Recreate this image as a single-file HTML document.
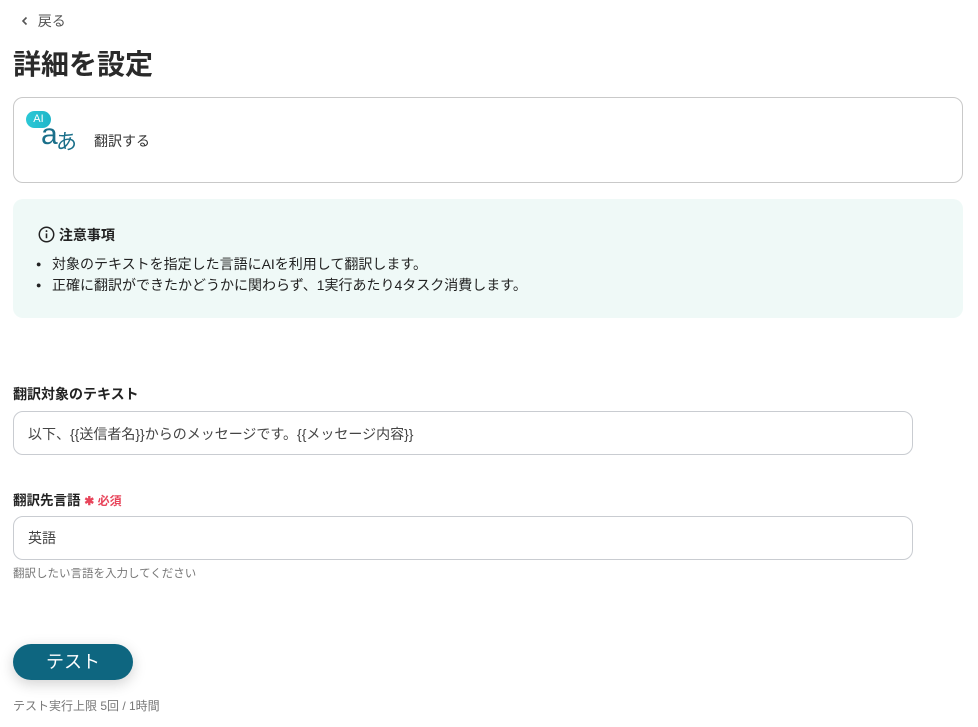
<!DOCTYPE html>
<html><head><meta charset="utf-8"><style>
*{box-sizing:border-box;margin:0;padding:0}
body{width:978px;height:727px;background:#fff;font-family:"Liberation Sans","Noto Sans CJK JP",sans-serif;color:#333;position:relative;overflow:hidden}
.a{position:absolute}
.box{border:1px solid #c9ccd1;border-radius:10px}
.b{display:inline-block;width:16px;font-size:9px;vertical-align:2px}
</style></head><body>
<div class="a" style="left:20px;top:11px;font-size:14px;color:#555">
<svg width="10" height="10" viewBox="0 0 10 10" style="vertical-align:0px"><path d="M6.5 1.5 L3 5 L6.5 8.5" stroke="#555" stroke-width="1.6" fill="none"/></svg>&nbsp; 戻る</div>
<div class="a" style="left:13px;top:47px;font-size:28px;font-weight:bold;color:#2a2a2a;line-height:36px">詳細を設定</div>
<div class="a box" style="left:13px;top:97px;width:950px;height:86px;border-color:#c9c9c9"></div>
<div class="a" style="left:41px;top:120px;font-size:30px;color:#1a6f8a;line-height:30px">a</div>
<div class="a" style="left:56px;top:130px;font-size:21px;color:#1a6f8a;line-height:26px">あ</div>
<div class="a" style="left:26px;top:111px;width:25px;height:17px;border-radius:9px;background:linear-gradient(90deg,#2cc8d6,#1fb6c9);color:#fff;font-size:11px;text-align:center;line-height:17px">AI</div>
<div class="a" style="left:94px;top:131px;font-size:14px">翻訳する</div>
<div class="a" style="left:13px;top:199px;width:950px;height:119px;background:#eff9f7;border-radius:10px"></div>
<div class="a" style="left:38px;top:225px;font-size:14px;font-weight:bold;color:#222">
<svg width="17" height="17" viewBox="0 0 16 16" style="vertical-align:-3px"><circle cx="8" cy="8" r="6.8" stroke="#222" stroke-width="1.4" fill="none"/><path d="M8 7v4.5" stroke="#222" stroke-width="1.5"/><circle cx="8" cy="4.8" r="0.9" fill="#222"/></svg> 注意事項</div>
<div class="a" style="left:36px;top:254px;font-size:14px;line-height:21px;color:#222">
<div><span class="b">●</span>対象のテキストを指定した言語にAIを利用して翻訳します。</div>
<div><span class="b">●</span>正確に翻訳ができたかどうかに関わらず、1実行あたり4タスク消費します。</div></div>
<div class="a" style="left:13px;top:384px;font-size:14px;font-weight:bold;color:#222">翻訳対象のテキスト</div>
<div class="a box" style="left:13px;top:411px;width:900px;height:44px"></div>
<div class="a" style="left:28px;top:424px;font-size:14px;color:#444">以下、{{送信者名}}からのメッセージです。{{メッセージ内容}}</div>
<div class="a" style="left:13px;top:489px;font-size:13.5px;font-weight:bold;color:#222">翻訳先言語 <span style="color:#e8455b;font-size:12px">✱ 必須</span></div>
<div class="a box" style="left:13px;top:516px;width:900px;height:44px"></div>
<div class="a" style="left:28px;top:528px;font-size:14px;color:#444">英語</div>
<div class="a" style="left:13px;top:565px;font-size:11.5px;color:#777">翻訳したい言語を入力してください</div>
<div class="a" style="left:13px;top:644px;width:120px;height:36px;border-radius:18px;background:#0e6680;color:#fff;font-size:18px;text-align:center;line-height:36px;box-shadow:0 4px 14px rgba(0,0,0,0.18)">テスト</div>
<div class="a" style="left:13px;top:697px;font-size:12px;color:#777">テスト実行上限 5回 / 1時間</div>
</body></html>
